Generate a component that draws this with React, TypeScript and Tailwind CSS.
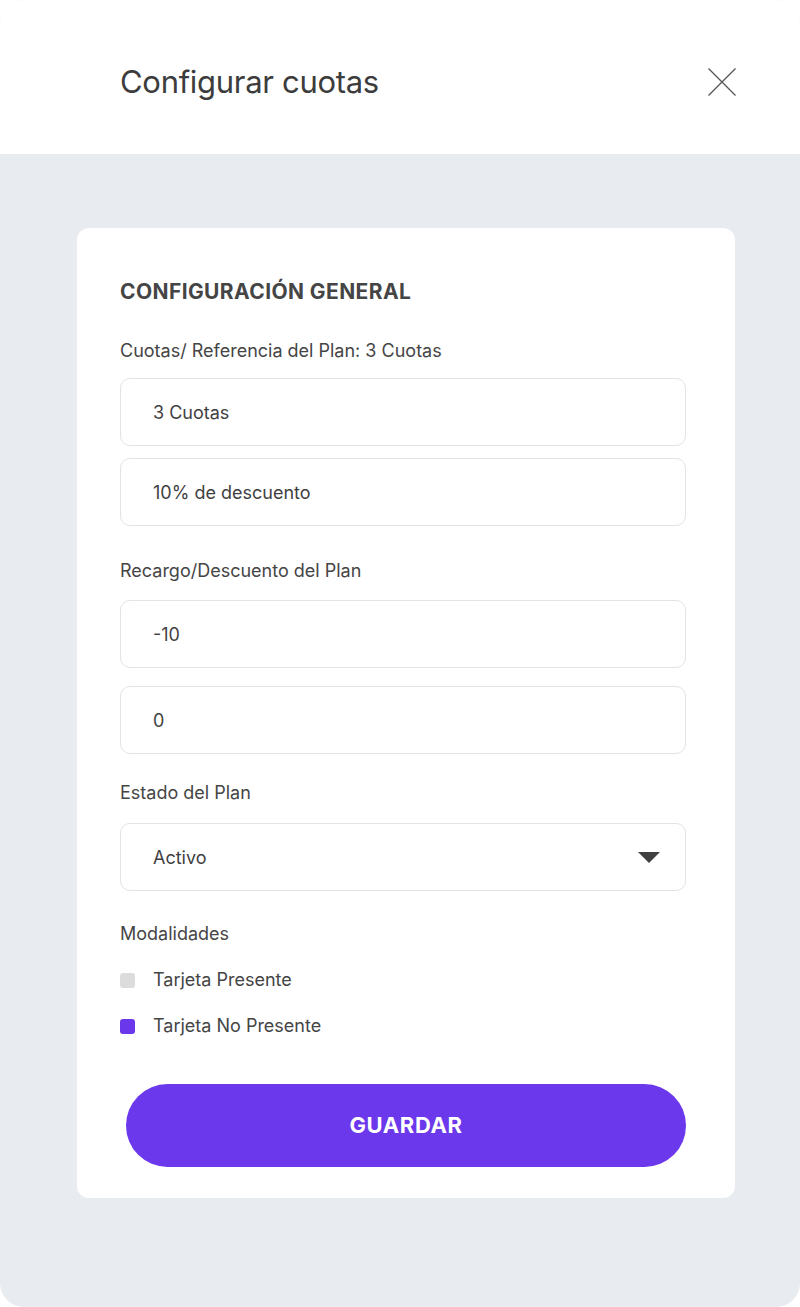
import { useState } from 'react';

const inputClass =
  'w-full h-[68px] rounded-[10px] border border-[#e3e3e3] bg-white px-[32px] text-[18px] text-[#3f3f3f] outline-none';

export default function App() {
  const [form, setForm] = useState({
    referencia: '3 Cuotas',
    descripcion: '10% de descuento',
    recargo: '-10',
    extra: '0',
    estado: 'Activo',
  });
  const [presente, setPresente] = useState(false);
  const [noPresente, setNoPresente] = useState(true);

  return (
    <div className="w-[800px] h-[1307px] bg-white font-['Inter',sans-serif]">
      <div className="flex h-full flex-col overflow-hidden rounded-[24px] bg-[#e8ebf0]">
        <div className="flex h-[154px] shrink-0 items-center justify-between bg-white pt-[10px] pl-[120px] pr-[64px]">
          <h1 className="text-[31px] font-normal tracking-[-0.3px] text-[#3c3c3c]">Configurar cuotas</h1>
          <button className="text-[#555]" aria-label="Cerrar">
            <svg width="28" height="28" viewBox="0 0 28 28" fill="none" stroke="currentColor" strokeWidth="1.3">
              <path d="M0.5 0.5L27.5 27.5M27.5 0.5L0.5 27.5" />
            </svg>
          </button>
        </div>

        <div className="pl-[77px] pr-[65px] pt-[74px]">
          <div className="rounded-[12px] bg-white pl-[43px] pr-[49px] pt-[50px] pb-[31px]">
            <h2 className="text-[21px] font-bold leading-[28px] tracking-[0.4px] text-[#454545]">CONFIGURACIÓN GENERAL</h2>

            <label className="mt-[33px] block text-[18px] leading-[24px] text-[#454545]">
              Cuotas/ Referencia del Plan: 3 Cuotas
            </label>
            <div className="mt-[15px] space-y-[12px]">
              <input className={inputClass} value={form.referencia} onChange={(e) => setForm({ ...form, referencia: e.target.value })} />
              <input className={inputClass} value={form.descripcion} onChange={(e) => setForm({ ...form, descripcion: e.target.value })} />
            </div>

            <label className="mt-[33px] block text-[18px] leading-[24px] text-[#454545]">Recargo/Descuento del Plan</label>
            <div className="mt-[17px] space-y-[18px]">
              <input className={inputClass} value={form.recargo} onChange={(e) => setForm({ ...form, recargo: e.target.value })} />
              <input className={inputClass} value={form.extra} onChange={(e) => setForm({ ...form, extra: e.target.value })} />
            </div>

            <label className="mt-[27px] block text-[18px] leading-[24px] text-[#454545]">Estado del Plan</label>
            <div className="relative mt-[18px]">
              <select
                className={inputClass + ' appearance-none'}
                value={form.estado}
                onChange={(e) => setForm({ ...form, estado: e.target.value })}
              >
                <option>Activo</option>
                <option>Inactivo</option>
              </select>
              <svg className="pointer-events-none absolute right-[26px] top-[29px]" width="22" height="11" viewBox="0 0 22 11">
                <path d="M0 0H22L11 11Z" fill="#404040" />
              </svg>
            </div>

            <p className="mt-[31px] text-[18px] leading-[24px] text-[#454545]">Modalidades</p>
            <div className="mt-[22px] space-y-[22px]">
              <label className="flex cursor-pointer items-center gap-[18px] text-[18px] leading-[24px] text-[#454545]">
                <span
                  onClick={() => setPresente(!presente)}
                  className={'h-[15px] w-[15px] rounded-[3px] ' + (presente ? 'bg-[#6a38ea]' : 'bg-[#dcdcdc]')}
                />
                Tarjeta Presente
              </label>
              <label className="flex cursor-pointer items-center gap-[18px] text-[18px] leading-[24px] text-[#454545]">
                <span
                  onClick={() => setNoPresente(!noPresente)}
                  className={'h-[15px] w-[15px] rounded-[3px] ' + (noPresente ? 'bg-[#6a38ea]' : 'bg-[#dcdcdc]')}
                />
                Tarjeta No Presente
              </label>
            </div>

            <div className="mt-[46px] pl-[6px]">
              <button className="h-[83px] w-full rounded-full bg-[#6b38ec] text-[22px] font-bold tracking-[0.6px] text-white">
                GUARDAR
              </button>
            </div>
          </div>
        </div>
      </div>
    </div>
  );
}
